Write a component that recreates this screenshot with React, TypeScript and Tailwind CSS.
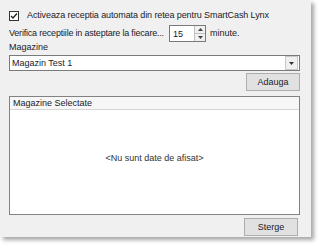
import React from "react";

function Button({ label }: { label: string }) {
  return (
    <div className="w-[54px] h-[18px] flex items-center justify-center bg-[#e1e1e1] border border-[#adadad] text-[9px]">
      {label}
    </div>
  );
}

export default function App() {
  return (
    <div
      className="w-[330px] h-[249px] bg-white text-[#1a1a2a] text-[9px] leading-none whitespace-nowrap"
      style={{ fontFamily: '"Liberation Sans", Arial, sans-serif' }}
    >
      <div className="w-[311px] h-[237px] bg-[#f0f0f0] shadow-[3px_3px_4px_rgba(0,0,0,0.35)] pl-[9px] pr-[11px] pt-[10px] flex flex-col">
        <div className="flex items-center gap-[6px] h-[11px]">
          <div className="w-[10px] h-[10px] bg-white border border-[#333] flex items-center justify-center">
            <svg width="8" height="8" viewBox="0 0 8 8">
              <path d="M1 4 L3 6 L7 1.5" stroke="#222" strokeWidth="1.3" fill="none" />
            </svg>
          </div>
          <span className="ml-[2px] tracking-[-0.1px]">Activeaza receptia automata din retea pentru SmartCash Lynx</span>
        </div>

        <div className="flex items-center mt-[4px] h-[17px]">
          <span className="w-[160px] shrink-0 tracking-[-0.2px]">Verifica receptiile in asteptare la fiecare...</span>
          <div className="w-[37px] h-[17px] shrink-0 bg-white border border-[#7a7a7a] flex justify-between">
            <span className="pl-[3px] pt-[4px]">15</span>
            <div className="w-[11px] flex flex-col border-l border-[#c0c0c0]">
              <div className="flex-1 flex items-center justify-center bg-[#f0f0f0] border-b border-[#c0c0c0]">
                <svg width="5" height="3" viewBox="0 0 5 3"><path d="M0 3 L2.5 0 L5 3Z" fill="#444" /></svg>
              </div>
              <div className="flex-1 flex items-center justify-center bg-[#f0f0f0]">
                <svg width="5" height="3" viewBox="0 0 5 3"><path d="M0 0 L2.5 3 L5 0Z" fill="#444" /></svg>
              </div>
            </div>
          </div>
          <span className="ml-[4px]">minute.</span>
        </div>

        <div className="mt-[1px] h-[10px]">Magazine</div>

        <div className="mt-[2px] h-[16px] bg-white border border-[#7a7a7a] flex items-center justify-between">
          <span className="pl-[2px]">Magazin Test 1</span>
          <div className="w-[13px] h-[14px] mr-[1px] bg-[#f0f0f0] border border-[#c8c8c8] flex items-center justify-center">
            <svg width="5" height="3" viewBox="0 0 5 3"><path d="M0 0 L2.5 3 L5 0Z" fill="#333" /></svg>
          </div>
        </div>

        <div className="mt-[2px] flex justify-end">
          <Button label="Adauga" />
        </div>

        <div className="mt-[5px] h-[119px] bg-white border border-[#828282] flex flex-col">
          <div className="h-[13px] bg-[#f7f7f7] border-b border-[#d5d5d5] flex items-center pl-[3px]">
            Magazine Selectate
          </div>
          <div className="flex-1 flex items-center justify-center pb-[8px] text-[#333]">
            &lt;Nu sunt date de afisat&gt;
          </div>
        </div>

        <div className="mt-[3px] flex justify-end pr-[2px]">
          <Button label="Sterge" />
        </div>
      </div>
    </div>
  );
}
